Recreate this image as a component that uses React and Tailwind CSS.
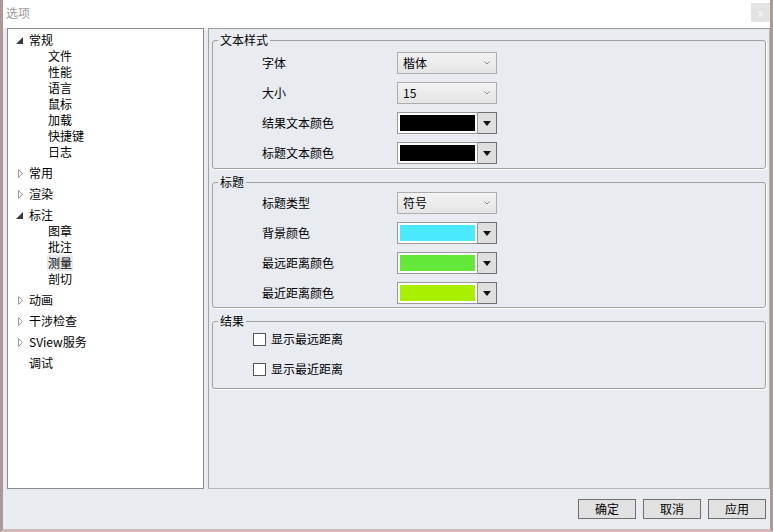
const tree = [
  { label: "常规", open: true, children: ["文件", "性能", "语言", "鼠标", "加载", "快捷键", "日志"] },
  { label: "常用" },
  { label: "渲染" },
  { label: "标注", open: true, children: ["图章", "批注", "测量", "剖切"], selected: "测量" },
  { label: "动画" },
  { label: "干涉检查" },
  { label: "SView服务" },
  { label: "调试", leaf: true },
];

function Arrow({ open, leaf }) {
  if (leaf) return <span className="w-[13px]" />;
  return (
    <span className="flex w-[13px] items-center">
      {open ? (
        <svg width="7" height="7" viewBox="0 0 7 7">
          <polygon points="7,0 7,7 0,7" fill="#3a3a3a" />
        </svg>
      ) : (
        <svg width="6" height="9" viewBox="0 0 6 9" className="ml-[2px]">
          <polygon points="0.5,0.5 4.5,4.5 0.5,8.5" fill="none" stroke="#9a9a9a" />
        </svg>
      )}
    </span>
  );
}

function Tree() {
  return (
    <div className="w-[197px] border border-[#8c8c94] bg-white pt-[3px]">
      {tree.map((node, i) => (
        <div key={node.label} className={i === 0 ? "" : "mt-[5px]"}>
          <div className="flex h-4 items-center pl-[8px] leading-4">
            <Arrow open={node.open} leaf={node.leaf} />
            <span>{node.label}</span>
          </div>
          {node.open &&
            node.children.map((c) => (
              <div key={c} className="flex h-4 items-center pl-[40px] leading-4">
                <span className={c === node.selected ? "-ml-px bg-[#e7e9ec] px-px" : ""}>{c}</span>
              </div>
            ))}
        </div>
      ))}
    </div>
  );
}

function Select({ value }) {
  return (
    <div className="flex h-[22px] w-[100px] items-center justify-between border border-[#adadad] bg-linear-to-b from-[#f2f2f2] to-[#e5e5e5] pl-[5px] pr-[6px]">
      <span className="leading-4">{value}</span>
      <svg width="6" height="4" viewBox="0 0 6 4">
        <path d="M0.5 0.5 L3 3 L5.5 0.5" fill="none" stroke="#8a8a8a" strokeWidth="1" />
      </svg>
    </div>
  );
}

function ColorPick({ color }) {
  return (
    <div className="flex h-[22px] w-[100px]">
      <div className="flex-1 border border-[#9a9a9a] bg-white p-[2px]">
        <div className="h-full w-full" style={{ background: color }} />
      </div>
      <div className="flex w-[19px] items-center justify-center border border-l-0 border-[#707070] bg-[#dfdfdf]">
        <svg width="8" height="5" viewBox="0 0 8 5">
          <path d="M0 0 L8 0 L4 5 Z" fill="#111" />
        </svg>
      </div>
    </div>
  );
}

function Row({ label, children }) {
  return (
    <div className="flex h-[22px] items-center pl-[49px]">
      <span className="w-[135px] leading-4">{label}</span>
      {children}
    </div>
  );
}

function Group({ title, className, children }) {
  return (
    <fieldset
      className={`rounded-[3px] border border-[#a0a0a0] shadow-[1px_1px_0_#fff] ${className}`}
    >
      <legend className="ml-[5px] px-[2px] leading-4">{title}</legend>
      {children}
    </fieldset>
  );
}

function Check({ label }) {
  return (
    <div className="flex h-5 items-center gap-[5px] pl-[40px]">
      <span className="h-[13px] w-[13px] border border-[#555] bg-white" />
      <span className="leading-4">{label}</span>
    </div>
  );
}

function Btn({ children }) {
  return (
    <button className="flex h-5 w-[58px] items-center justify-center border border-[#707070] bg-[#e1e1e1] leading-4">
      {children}
    </button>
  );
}

export default function App() {
  return (
    <div className="flex h-[532px] w-[773px] flex-col border-x-[3px] border-b-[3px] border-x-[#ad9797] border-b-[#d4b9b9] bg-[#e8ebf0] font-['Noto_Sans_CJK_SC','Noto_Sans',sans-serif] text-[12px] text-black">
      <div className="flex h-[28px] items-start justify-between bg-white">
        <span className="ml-[3px] mt-[5px] text-[12px] leading-4 text-[#9c9c9c]">选项</span>
        <span className="mt-[3px] flex h-[19px] w-[19px] items-center justify-center bg-[#e3e3e3] text-[11px] leading-none text-[#f8f8f8]">
          x
        </span>
      </div>
      <div className="flex h-[461px] gap-[4px] pl-[4px]">
        <Tree />
        <div className="flex-1 border border-[#b3b3b3] border-l-[#a3a3a3] border-t-[#9c9c9c] px-[3px] pt-[3px]">
          <Group title="文本样式">
            <div className="flex flex-col gap-2 pb-[4px] pt-[4px]">
              <Row label="字体">
                <Select value="楷体" />
              </Row>
              <Row label="大小">
                <Select value="15" />
              </Row>
              <Row label="结果文本颜色">
                <ColorPick color="#000000" />
              </Row>
              <Row label="标题文本颜色">
                <ColorPick color="#000000" />
              </Row>
            </div>
          </Group>
          <Group title="标题" className="mt-[5px]">
            <div className="flex flex-col gap-2 pb-[3px] pt-[2px]">
              <Row label="标题类型">
                <Select value="符号" />
              </Row>
              <Row label="背景颜色">
                <ColorPick color="#4ae9fd" />
              </Row>
              <Row label="最远距离颜色">
                <ColorPick color="#63e83a" />
              </Row>
              <Row label="最近距离颜色">
                <ColorPick color="#a9f000" />
              </Row>
            </div>
          </Group>
          <Group title="结果" className="mt-[5px]">
            <div className="flex flex-col gap-[10px] pb-[9px]">
              <Check label="显示最远距离" />
              <Check label="显示最近距离" />
            </div>
          </Group>
        </div>
      </div>
      <div className="flex justify-end gap-[7px] pr-[4px] pt-[10px]">
        <Btn>确定</Btn>
        <Btn>取消</Btn>
        <Btn>应用</Btn>
      </div>
    </div>
  );
}
